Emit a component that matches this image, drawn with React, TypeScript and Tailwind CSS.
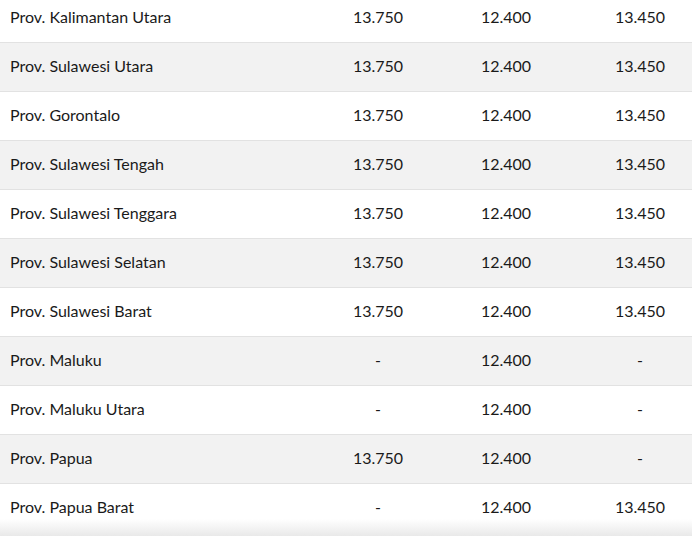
const rows: [string, string, string, string][] = [
  ["Prov. Kalimantan Utara", "13.750", "12.400", "13.450"],
  ["Prov. Sulawesi Utara", "13.750", "12.400", "13.450"],
  ["Prov. Gorontalo", "13.750", "12.400", "13.450"],
  ["Prov. Sulawesi Tengah", "13.750", "12.400", "13.450"],
  ["Prov. Sulawesi Tenggara", "13.750", "12.400", "13.450"],
  ["Prov. Sulawesi Selatan", "13.750", "12.400", "13.450"],
  ["Prov. Sulawesi Barat", "13.750", "12.400", "13.450"],
  ["Prov. Maluku", "-", "12.400", "-"],
  ["Prov. Maluku Utara", "-", "12.400", "-"],
  ["Prov. Papua", "13.750", "12.400", "-"],
  ["Prov. Papua Barat", "-", "12.400", "13.450"],
];

export default function App() {
  return (
    <div className="relative h-[536px] w-[692px] overflow-hidden bg-white text-[16px] text-[#1a1a1a] [font-family:'Century_Gothic','URW_Gothic','Lato','DejaVu_Sans',sans-serif]">
      <div className="-mt-[6px] w-[710px]">
        {rows.map((row, i) => (
          <div
            key={row[0]}
            className={`grid h-[49px] grid-cols-[314px_128px_128px_140px] items-center border-b pb-[2px] ${
              i === rows.length - 1 ? "border-transparent" : "border-[#e2e2e2]"
            } ${i % 2 === 1 ? "bg-[#f2f2f2]" : "bg-white"}`}
          >
            <div className="pl-[10px]">{row[0]}</div>
            <div className="text-center">{row[1]}</div>
            <div className="text-center">{row[2]}</div>
            <div className="text-center">{row[3]}</div>
          </div>
        ))}
      </div>
      {/* bottom fade shadow */}
      <div className="pointer-events-none absolute inset-x-0 bottom-0 h-[17px] bg-gradient-to-b from-white/0 to-[#e9e9e9]" />
    </div>
  );
}
